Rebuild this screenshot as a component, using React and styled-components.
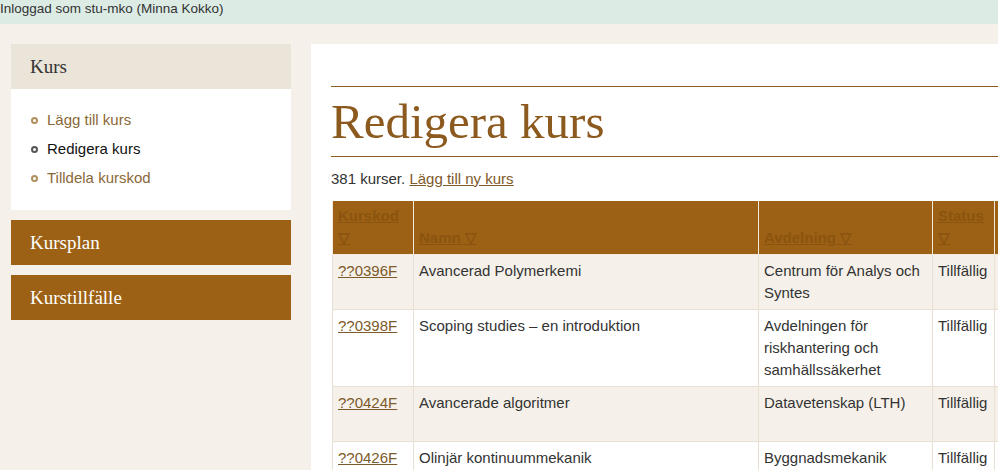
import React from "react";
import styled, { createGlobalStyle } from "styled-components";

const GlobalStyle = createGlobalStyle`
  html, body {
    margin: 0;
    padding: 0;
    background: #f5f1ea;
    font-family: "Liberation Sans", Arial, sans-serif;
    font-size: 15px;
    color: #333;
    overflow: hidden;
  }
`;

const TopBar = styled.div`
  height: 24px;
  line-height: 18px;
  background: #dcece5;
  color: #333;
  font-size: 13.5px;
  white-space: nowrap;
`;

const Layout = styled.div`
  display: flex;
  gap: 20px;
  padding: 20px 0 0 11px;
  align-items: flex-start;
`;

const Sidebar = styled.nav`
  width: 280px;
  flex: none;
  display: flex;
  flex-direction: column;
  gap: 10px;
`;

const Block = styled.div`
  display: flex;
  flex-direction: column;
`;

const BlockTitle = styled.div`
  height: 45px;
  line-height: 45px;
  padding-left: 19px;
  font-family: Georgia, "Liberation Serif", serif;
  font-size: 19px;
  background: ${(p) => (p.$active ? "#ebe4d8" : "#9c6114")};
  color: ${(p) => (p.$active ? "#333" : "#fff")};
`;

const SubList = styled.ul`
  list-style: none;
  margin: 0;
  padding: 16px 0 18px 0;
  background: #fff;
`;

const SubItem = styled.li`
  position: relative;
  line-height: 29px;
  padding-left: 36px;
  color: ${(p) => (p.$current ? "#111" : "#8a6838")};
  &::before {
    content: "";
    position: absolute;
    left: 20px;
    top: 12px;
    width: 3px;
    height: 3px;
    border-radius: 50%;
    border: 2px solid ${(p) => (p.$current ? "#555" : "#b0905e")};
  }
`;

const Main = styled.main`
  width: 760px;
  flex: none;
  background: #fff;
  padding: 42px 0 40px 20px;
`;

const Heading = styled.h1`
  margin: 0;
  border-top: 1px solid #8c5a1e;
  border-bottom: 1px solid #8c5a1e;
  height: 69px;
  line-height: 69px;
  font-family: Georgia, "Liberation Serif", serif;
  font-weight: normal;
  font-size: 49px;
  color: #8c5a1e;
  white-space: nowrap;
`;

const Summary = styled.p`
  margin: 13px 0 13px;
  line-height: 18px;
  color: #333;
`;

const Link = styled.a`
  color: #7d5a2a;
  text-decoration: underline;
  cursor: pointer;
`;

const Table = styled.table`
  border-collapse: collapse;
  table-layout: fixed;
  margin-left: 1px;
`;

const HeadCell = styled.th`
  width: ${(p) => p.$w}px;
  background: #9c6114;
  border: 1px solid #f2eadc;
  border-top: none;
  padding: 4px 5px 5px;
  text-align: left;
  vertical-align: bottom;
  line-height: 22px;
  font-weight: bold;
  color: #8a5410;
  a {
    color: #8a5410;
  }
`;

const Row = styled.tr`
  background: ${(p) => (p.$odd ? "#f5f1ea" : "#fff")};
`;

const Cell = styled.td`
  border: 1px solid #e8e0d2;
  padding: 5px 5px 5px;
  height: 44px;
  vertical-align: top;
  line-height: 22px;
  color: #333;
`;

const columns = [
  { label: "Kurskod ▽", w: 70 },
  { label: "Namn ▽", w: 334 },
  { label: "Avdelning ▽", w: 163 },
  { label: "Status ▽", w: 51 },
  { label: "", w: 80 },
];

const courses = [
  ["??0396F", "Avancerad Polymerkemi", "Centrum för Analys och Syntes", "Tillfällig"],
  ["??0398F", "Scoping studies – en introduktion", "Avdelningen för riskhantering och samhällssäkerhet", "Tillfällig"],
  ["??0424F", "Avancerade algoritmer", "Datavetenskap (LTH)", "Tillfällig"],
  ["??0426F", "Olinjär kontinuummekanik", "Byggnadsmekanik", "Tillfällig"],
];

export default function App() {
  return (
    <>
      <GlobalStyle />
      <TopBar>Inloggad som stu-mko (Minna Kokko)</TopBar>
      <Layout>
        <Sidebar>
          <Block>
            <BlockTitle $active>Kurs</BlockTitle>
            <SubList>
              <SubItem>Lägg till kurs</SubItem>
              <SubItem $current>Redigera kurs</SubItem>
              <SubItem>Tilldela kurskod</SubItem>
            </SubList>
          </Block>
          <Block>
            <BlockTitle>Kursplan</BlockTitle>
          </Block>
          <Block>
            <BlockTitle>Kurstillfälle</BlockTitle>
          </Block>
        </Sidebar>
        <Main>
          <Heading>Redigera kurs</Heading>
          <Summary>
            381 kurser. <Link>Lägg till ny kurs</Link>
          </Summary>
          <Table>
            <thead>
              <tr>
                {columns.map((c, i) => (
                  <HeadCell key={i} $w={c.w}>
                    {c.label && <Link>{c.label}</Link>}
                  </HeadCell>
                ))}
              </tr>
            </thead>
            <tbody>
              {courses.map((c, i) => (
                <Row key={c[0]} $odd={i % 2 === 0}>
                  <Cell>
                    <Link>{c[0]}</Link>
                  </Cell>
                  <Cell>{c[1]}</Cell>
                  <Cell>{c[2]}</Cell>
                  <Cell>{c[3]}</Cell>
                  <Cell />
                </Row>
              ))}
            </tbody>
          </Table>
        </Main>
      </Layout>
    </>
  );
}
